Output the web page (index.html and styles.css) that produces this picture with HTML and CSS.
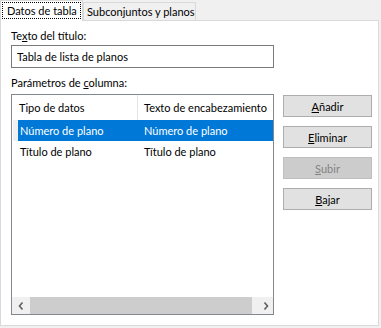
FILE: index.html
```html
<!DOCTYPE html>
<html lang="es">
<head>
  <meta charset="UTF-8">
  <title>Datos de tabla</title>
  <link rel="stylesheet" href="styles.css">
</head>
<body>
  <div class="tabs">
    <div class="tab tab-active"><span class="tab-focus">Datos de tabla</span></div>
    <div class="tab">Subconjuntos y planos</div>
  </div>

  <div class="panel">
    <div class="label">Te<u>x</u>to del título:</div>
    <div class="text-input">Tabla de lista de planos</div>

    <div class="label label-columns">Parámetros de <u>c</u>olumna:</div>
    <div class="columns">
      <div class="list">
        <div class="list-head">
          <div class="cell cell-type">Tipo de datos</div>
          <div class="cell cell-text">Texto de encabezamiento</div>
        </div>
        <div class="list-body">
          <div class="row row-selected">
            <div class="cell cell-type">Número de plano</div>
            <div class="cell cell-text">Número de plano</div>
          </div>
          <div class="row">
            <div class="cell cell-type">Título de plano</div>
            <div class="cell cell-text">Título de plano</div>
          </div>
        </div>
        <div class="hscroll">
          <div class="hscroll-arrow">
            <svg width="6" height="8" viewBox="0 0 6 8"><polyline points="4.5,0.5 1.5,4 4.5,7.5" fill="none" stroke="#606060" stroke-width="1.6"/></svg>
          </div>
          <div class="hscroll-thumb"></div>
          <div class="hscroll-arrow hscroll-arrow-right">
            <svg width="6" height="8" viewBox="0 0 6 8"><polyline points="1.5,0.5 4.5,4 1.5,7.5" fill="none" stroke="#606060" stroke-width="1.6"/></svg>
          </div>
        </div>
      </div>

      <div class="buttons">
        <button class="btn"><u>A</u>ñadir</button>
        <button class="btn"><u>E</u>liminar</button>
        <button class="btn" disabled><u>S</u>ubir</button>
        <button class="btn"><u>B</u>ajar</button>
      </div>
    </div>
  </div>
</body>
</html>
```

FILE: styles.css
```css
body {
  margin: 0;
  width: 381px;
  height: 328px;
  overflow: hidden;
  background: #f0f0f0;
  font-family: "Lato", "Noto Sans", sans-serif;
  font-size: 11px;
  color: #000;
}

/* Tabs */
.tabs {
  display: flex;
  align-items: flex-end;
  height: 20px;
}

.tab {
  box-sizing: border-box;
  height: 18px;
  width: 113px;
  padding-left: 3px;
  line-height: 17px;
  border: 1px solid #d9d9d9;
  border-bottom: none;
  background: #f0f0f0;
  white-space: nowrap;
}

.tab-active {
  position: relative; /* sits over the panel's top border */
  z-index: 1;
  width: 83px;
  height: 21px;
  margin-bottom: -1px;
  padding: 1px 0 0 1px;
  background: #fff;
}

.tab-focus {
  display: block;
  box-sizing: border-box;
  width: 79px;
  height: 17px;
  padding-left: 4px;
  line-height: 15px;
  border: 1px dotted #000;
}

/* Panel */
.panel {
  box-sizing: border-box;
  width: 379px;
  height: 306px;
  padding: 7px 0 0 10px;
  background: #fff;
  border: 1px solid #d9d9d9;
}

.label {
  line-height: 15px;
}

.label-columns {
  margin-top: 7px;
}

.text-input {
  box-sizing: border-box;
  width: 263px;
  height: 23px;
  margin-top: 2px;
  padding-left: 5px;
  line-height: 21px;
  border: 1px solid #7a7a7a;
}

.columns {
  display: flex;
  align-items: flex-start;
  margin-top: 4px;
}

/* List view */
.list {
  box-sizing: border-box;
  display: flex;
  flex-direction: column;
  width: 263px;
  height: 221px;
  border: 1px solid #828790;
}

.list-head,
.row {
  display: flex;
  white-space: nowrap;
}

.list-head {
  height: 25px;
  line-height: 25px;
}

.cell {
  box-sizing: border-box;
  flex-shrink: 0;
  overflow: hidden;
}

.list-head .cell-type {
  width: 126px;
  padding-left: 7px;
  border-right: 1px solid #e5e5e5;
}

.cell-text {
  padding-left: 6px;
}

.list-body {
  flex: 1;
}

.row {
  height: 21px;
  line-height: 21px;
}

.row .cell-type {
  width: 126px;
  padding-left: 8px;
}

.row-selected {
  color: #fff;
  background: linear-gradient(to right, #fff 1px, #f0f0f0 1px, #f0f0f0 6px, #0078d7 6px);
}

.hscroll {
  display: flex;
  height: 17px;
  background: #f0f0f0;
}

.hscroll-arrow {
  display: flex;
  align-items: center;
  justify-content: center;
  width: 18px;
}

.hscroll-arrow-right {
  width: 21px;
  justify-content: flex-end;
  padding-right: 4px;
  box-sizing: border-box;
}

.hscroll-thumb {
  flex: 1;
  background: #cdcdcd;
}

/* Buttons */
.buttons {
  display: flex;
  flex-direction: column;
  gap: 9px;
  margin: 1px 0 0 9px;
}

.btn {
  box-sizing: border-box;
  width: 89px;
  height: 22px;
  padding: 0;
  font: inherit;
  color: #000;
  background: #e1e1e1;
  border: 1px solid #adadad;
}

.btn:disabled {
  color: #838383;
  background: #cccccc;
  border-color: #bfbfbf;
}
```
